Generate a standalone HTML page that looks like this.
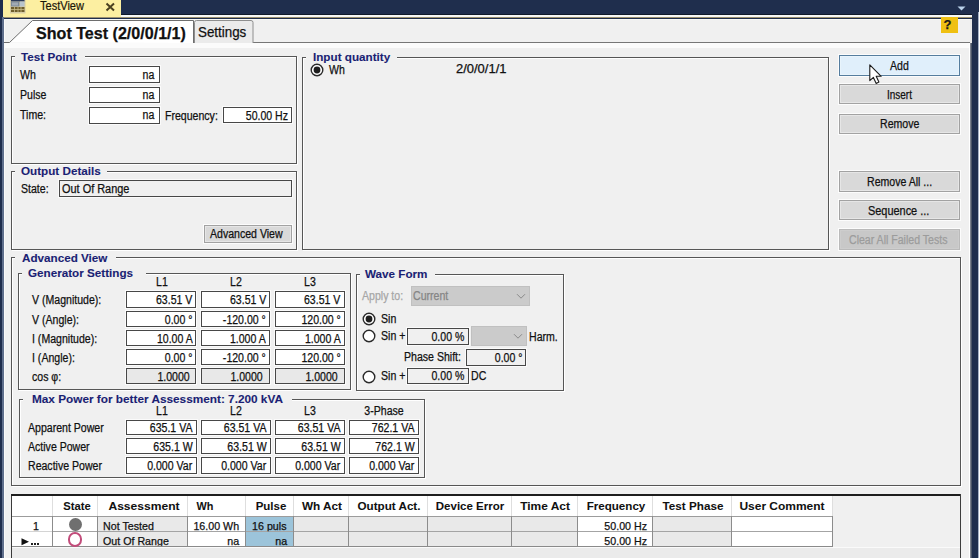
<!DOCTYPE html>
<html><head><meta charset="utf-8">
<style>
*{box-sizing:border-box}
html,body{margin:0;padding:0}
body{width:979px;height:558px;background:#1f2e4d;position:relative;overflow:hidden;font-family:"Liberation Sans",sans-serif;color:#111}
.a{position:absolute}
.t{position:absolute;white-space:nowrap;line-height:1;-webkit-text-stroke:0.25px currentColor}
</style></head><body>
<div class="a" style="left:3.00px;top:0.00px;width:117.50px;height:17.00px;background:#fcefa1;"></div>
<div class="a" style="left:120.50px;top:13.80px;width:851.00px;height:1.20px;background:#101a2a;"></div>
<div class="a" style="left:120.50px;top:15.00px;width:851.00px;height:2.00px;background:#f7f8f6;"></div>
<div class="a" style="left:3.00px;top:17.00px;width:968.50px;height:1.30px;background:#9d9270;"></div>
<div class="a" style="left:3.00px;top:18.50px;width:968.50px;height:1.50px;background:#f9f9f4;"></div>
<div class="a" style="left:4.00px;top:20.00px;width:967.50px;height:538.00px;background:#f0f0f0;"></div>
<div class="a" style="left:2.00px;top:17.00px;width:2.00px;height:541.00px;background:#5f6f8c;"></div>
<div class="a" style="left:4.00px;top:20.00px;width:1.00px;height:538.00px;background:#fafafa;"></div>
<svg class="a" style="left:10px;top:0" width="16" height="14">
 <rect x="0" y="0" width="15.5" height="13.5" fill="#d6cda6"/>
 <rect x="1" y="0" width="13.5" height="1.5" fill="#2a3a5a"/>
 <rect x="1" y="1.5" width="8.5" height="5" fill="#7d8a98"/>
 <rect x="2" y="2.5" width="6" height="3" fill="#a0aab4"/>
 <rect x="10" y="1.5" width="4.5" height="5" fill="#b8c4cc"/>
 <rect x="1" y="7" width="13.5" height="5" fill="#6e5e2c"/>
 <path d="M1 9.5 H14.5 M4.5 7 V12 M8 7 V12 M11 7 V12" stroke="#c8bc8a" stroke-width="0.8"/>
</svg>
<div class="t" style="left:40.13px;top:0.00px;font-size:12px;color:#1a1608;transform:scaleX(0.92);transform-origin:0 0;-webkit-text-stroke:0.2px #1a1608">TestView</div>
<svg class="a" style="left:105px;top:2px" width="11" height="10"><path d="M1.5 1.5 L9 8.5 M9 1.5 L1.5 8.5" stroke="#4a4020" stroke-width="2"/></svg>
<svg class="a" style="left:957px;top:6px" width="10" height="5"><path d="M0.5 0.5 H8.5 L4.5 4.5Z" fill="#b9d2ea"/></svg>
<div class="a" style="left:4.00px;top:43.00px;width:967.50px;height:4.50px;background:#fbfbfb;"></div>
<div class="a" style="left:194.00px;top:42.00px;width:777.50px;height:1.30px;background:#767676;"></div>
<svg class="a" style="left:0;top:0" width="260" height="48">
 <path d="M4 42.5 H9.5 L32.5 20.5 H193.5 V43" fill="#fff" stroke="#6e6e6e" stroke-width="1"/>
 <rect x="4" y="43" width="190" height="4.5" fill="#fbfbfb"/>
 <path d="M194.5 43 V22.5 Q194.5 20.5 196.5 20.5 H251 Q253 20.5 253 22.5 V43" fill="#ebebeb" stroke="#8e8e8e" stroke-width="1"/>
</svg>
<div class="t" style="left:36.27px;top:24.58px;font-size:16.5px;font-weight:bold;color:#111;transform:scaleX(0.975);transform-origin:0 0;letter-spacing:0">Shot Test (2/0/0/1/1)</div>
<div class="t" style="left:197.66px;top:25.30px;font-size:14px;color:#111;transform:scaleX(0.955);transform-origin:0 0;letter-spacing:0">Settings</div>
<div class="a" style="left:940.8px;top:17.2px;width:16.8px;height:16.3px;background:#efc012"></div>
<div class="t" style="left:747.50px;width:400px;text-align:center;top:17.85px;font-size:13px;font-weight:bold;color:#1a1a1a;transform:scaleX(1);transform-origin:50% 0;">?</div>
<div class="a" style="left:968.50px;top:43.00px;width:1.00px;height:515.00px;background:#ffffff;"></div>
<div class="a" style="left:969.50px;top:43.00px;width:1.30px;height:515.00px;background:#7a808c;"></div>
<div class="a" style="left:970.80px;top:43.00px;width:1.20px;height:515.00px;background:#4a5466;"></div>
<div class="a" style="left:969.50px;top:18.50px;width:2.50px;height:24.50px;background:#e8e8e8;"></div>
<div class="a" style="left:977.50px;top:12.00px;width:1.50px;height:546.00px;background:#a4b0c4;"></div>
<div class="a" style="left:11px;top:56px;width:286px;height:108px;border:1px solid #565656;box-shadow:1px 1px 0 #fff, inset 1px 1px 0 #fff"></div>
<div class="a" style="left:15.00px;top:54.00px;width:70.00px;height:5.00px;background:#f0f0f0;"></div>
<div class="t" style="left:21.18px;top:51.73px;font-size:11.5px;font-weight:bold;color:#1b1f74;transform:scaleX(1.015);transform-origin:0 0;letter-spacing:0;-webkit-text-stroke:0.1px currentColor">Test Point</div>
<div class="t" style="left:19.66px;top:69.30px;font-size:12px;color:#111;transform:scaleX(0.88);transform-origin:0 0;">Wh</div>
<div class="t" style="left:19.66px;top:89.10px;font-size:12px;color:#111;transform:scaleX(0.88);transform-origin:0 0;">Pulse</div>
<div class="t" style="left:19.66px;top:109.10px;font-size:12px;color:#111;transform:scaleX(0.88);transform-origin:0 0;">Time:</div>
<div class="a" style="left:89px;top:66px;width:71px;height:17px;background:#fff;border:1px solid #474747;box-shadow:0 0 0 1px #fbfbfb"></div>
<div class="t" style="right:824.46px;top:69.30px;font-size:12px;color:#111;transform:scaleX(0.88);transform-origin:100% 0;text-align:right;">na</div>
<div class="a" style="left:89px;top:87px;width:71px;height:16px;background:#fff;border:1px solid #474747;box-shadow:0 0 0 1px #fbfbfb"></div>
<div class="t" style="right:824.46px;top:89.10px;font-size:12px;color:#111;transform:scaleX(0.88);transform-origin:100% 0;text-align:right;">na</div>
<div class="a" style="left:89px;top:107px;width:71px;height:17px;background:#fff;border:1px solid #474747;box-shadow:0 0 0 1px #fbfbfb"></div>
<div class="t" style="right:824.46px;top:109.10px;font-size:12px;color:#111;transform:scaleX(0.88);transform-origin:100% 0;text-align:right;">na</div>
<div class="t" style="left:165.36px;top:109.70px;font-size:12px;color:#111;transform:scaleX(0.88);transform-origin:0 0;">Frequency:</div>
<div class="a" style="left:223px;top:107px;width:69px;height:16px;background:#fff;border:1px solid #474747;box-shadow:0 0 0 1px #fbfbfb"></div>
<div class="t" style="right:691.26px;top:109.70px;font-size:12px;color:#111;transform:scaleX(0.88);transform-origin:100% 0;text-align:right;">50.00 Hz</div>
<div class="a" style="left:11px;top:171px;width:286px;height:79px;border:1px solid #565656;box-shadow:1px 1px 0 #fff, inset 1px 1px 0 #fff"></div>
<div class="a" style="left:15.00px;top:169.00px;width:92.40px;height:5.00px;background:#f0f0f0;"></div>
<div class="t" style="left:21.48px;top:165.62px;font-size:11.5px;font-weight:bold;color:#1b1f74;transform:scaleX(1.015);transform-origin:0 0;letter-spacing:0;-webkit-text-stroke:0.1px currentColor">Output Details</div>
<div class="t" style="left:20.56px;top:182.80px;font-size:12px;color:#111;transform:scaleX(0.88);transform-origin:0 0;">State:</div>
<div class="a" style="left:59px;top:180px;width:233px;height:17px;background:#f0f0f0;border:1px solid #474747;box-shadow:0 0 0 1px #fbfbfb"></div>
<div class="t" style="left:61.94px;top:182.80px;font-size:12px;color:#111;transform:scaleX(0.91);transform-origin:0 0;">Out Of Range</div>
<div class="a" style="left:204px;top:225px;width:88px;height:18px;background:#d9d9d9;border:1px solid #a2a2a2;box-shadow:inset 0 0 0 1px #e6e6e6, 0 0 0 1px #fcfcfc"></div>
<div class="t" style="left:210.26px;top:227.60px;font-size:12px;color:#111;transform:scaleX(0.88);transform-origin:0 0;">Advanced View</div>
<div class="a" style="left:302px;top:57px;width:527px;height:193px;border:1px solid #565656;box-shadow:1px 1px 0 #fff, inset 1px 1px 0 #fff"></div>
<div class="a" style="left:306.00px;top:55.00px;width:90.60px;height:5.00px;background:#f0f0f0;"></div>
<div class="t" style="left:312.98px;top:51.83px;font-size:11.5px;font-weight:bold;color:#1b1f74;transform:scaleX(1.015);transform-origin:0 0;letter-spacing:0;-webkit-text-stroke:0.1px currentColor">Input quantity</div>
<svg class="a" style="left:308.70px;top:62.20px" width="16" height="16"><circle cx="8" cy="8" r="5.8" fill="#fff" stroke="#2a2a2a" stroke-width="1.4"/><circle cx="8" cy="8" r="3.4" fill="#1e1e1e"/></svg>
<div class="t" style="left:329.46px;top:64.40px;font-size:12px;color:#111;transform:scaleX(0.88);transform-origin:0 0;">Wh</div>
<div class="t" style="left:455.89px;top:62.80px;font-size:12px;color:#111;transform:scaleX(1.08);transform-origin:0 0;">2/0/0/1/1</div>
<div class="a" style="left:839px;top:55px;width:121px;height:21px;background:#e0effb;border:1px solid #557d9e;box-shadow:inset 0 0 0 1px #e8f4fc, 0 0 0 1px #fcfcfc"></div>
<div class="t" style="left:889.56px;top:59.50px;font-size:12px;color:#111;transform:scaleX(0.88);transform-origin:0 0;">Add</div>
<div class="a" style="left:839px;top:84px;width:121px;height:20px;background:#d9d9d9;border:1px solid #a2a2a2;box-shadow:inset 0 0 0 1px #e6e6e6, 0 0 0 1px #fcfcfc"></div>
<div class="t" style="left:886.60px;top:88.70px;font-size:12px;color:#111;transform:scaleX(0.83);transform-origin:0 0;">Insert</div>
<div class="a" style="left:839px;top:114px;width:121px;height:20px;background:#d9d9d9;border:1px solid #a2a2a2;box-shadow:inset 0 0 0 1px #e6e6e6, 0 0 0 1px #fcfcfc"></div>
<div class="t" style="left:880.06px;top:117.50px;font-size:12px;color:#111;transform:scaleX(0.88);transform-origin:0 0;">Remove</div>
<div class="a" style="left:839px;top:171px;width:121px;height:21px;background:#d9d9d9;border:1px solid #a2a2a2;box-shadow:inset 0 0 0 1px #e6e6e6, 0 0 0 1px #fcfcfc"></div>
<div class="t" style="left:866.66px;top:176.20px;font-size:12px;color:#111;transform:scaleX(0.88);transform-origin:0 0;">Remove All ...</div>
<div class="a" style="left:839px;top:200px;width:121px;height:20px;background:#d9d9d9;border:1px solid #a2a2a2;box-shadow:inset 0 0 0 1px #e6e6e6, 0 0 0 1px #fcfcfc"></div>
<div class="t" style="left:867.54px;top:204.60px;font-size:12px;color:#111;transform:scaleX(0.91);transform-origin:0 0;">Sequence ...</div>
<div class="a" style="left:839px;top:229px;width:121px;height:21px;background:#c8c8c8;border:1px solid #bababa;box-shadow:inset 0 0 0 1px #cdcdcd, 0 0 0 1px #fcfcfc"></div>
<div class="t" style="left:849.06px;top:233.90px;font-size:12px;color:#9c9c9c;transform:scaleX(0.88);transform-origin:0 0;">Clear All Failed Tests</div>
<div class="a" style="left:11px;top:257px;width:950px;height:229px;border:1px solid #565656;box-shadow:1px 1px 0 #fff, inset 1px 1px 0 #fff"></div>
<div class="a" style="left:15.00px;top:255.00px;width:100.70px;height:5.00px;background:#f0f0f0;"></div>
<div class="t" style="left:21.68px;top:252.53px;font-size:11.5px;font-weight:bold;color:#1b1f74;transform:scaleX(1.015);transform-origin:0 0;letter-spacing:0;-webkit-text-stroke:0.1px currentColor">Advanced View</div>
<div class="a" style="left:18px;top:273px;width:333px;height:117px;border:1px solid #565656;box-shadow:1px 1px 0 #fff, inset 1px 1px 0 #fff"></div>
<div class="a" style="left:22.00px;top:271.00px;width:124.00px;height:5.00px;background:#f0f0f0;"></div>
<div class="t" style="left:28.48px;top:268.33px;font-size:11.5px;font-weight:bold;color:#1b1f74;transform:scaleX(1.015);transform-origin:0 0;letter-spacing:0;-webkit-text-stroke:0.1px currentColor">Generator Settings</div>
<div class="t" style="left:-38.50px;width:400px;text-align:center;top:275.60px;font-size:12px;color:#111;transform:scaleX(0.88);transform-origin:50% 0;">L1</div>
<div class="t" style="left:35.60px;width:400px;text-align:center;top:275.60px;font-size:12px;color:#111;transform:scaleX(0.88);transform-origin:50% 0;">L2</div>
<div class="t" style="left:110.10px;width:400px;text-align:center;top:275.60px;font-size:12px;color:#111;transform:scaleX(0.88);transform-origin:50% 0;">L3</div>
<div class="t" style="left:31.66px;top:294.30px;font-size:12px;color:#111;transform:scaleX(0.88);transform-origin:0 0;">V (Magnitude):</div>
<div class="a" style="left:126px;top:291px;width:70px;height:17px;background:#fff;border:1px solid #474747;box-shadow:0 0 0 1px #fbfbfb"></div>
<div class="t" style="right:786.66px;top:294.30px;font-size:12px;color:#111;transform:scaleX(0.88);transform-origin:100% 0;text-align:right;">63.51 V</div>
<div class="a" style="left:201px;top:291px;width:69px;height:17px;background:#fff;border:1px solid #474747;box-shadow:0 0 0 1px #fbfbfb"></div>
<div class="t" style="right:712.96px;top:294.30px;font-size:12px;color:#111;transform:scaleX(0.88);transform-origin:100% 0;text-align:right;">63.51 V</div>
<div class="a" style="left:275px;top:291px;width:70px;height:17px;background:#fff;border:1px solid #474747;box-shadow:0 0 0 1px #fbfbfb"></div>
<div class="t" style="right:638.26px;top:294.30px;font-size:12px;color:#111;transform:scaleX(0.88);transform-origin:100% 0;text-align:right;">63.51 V</div>
<div class="t" style="left:31.66px;top:313.60px;font-size:12px;color:#111;transform:scaleX(0.88);transform-origin:0 0;">V (Angle):</div>
<div class="a" style="left:126px;top:311px;width:70px;height:16px;background:#fff;border:1px solid #474747;box-shadow:0 0 0 1px #fbfbfb"></div>
<div class="t" style="right:786.66px;top:313.60px;font-size:12px;color:#111;transform:scaleX(0.88);transform-origin:100% 0;text-align:right;">0.00 °</div>
<div class="a" style="left:201px;top:311px;width:69px;height:16px;background:#fff;border:1px solid #474747;box-shadow:0 0 0 1px #fbfbfb"></div>
<div class="t" style="right:712.96px;top:313.60px;font-size:12px;color:#111;transform:scaleX(0.88);transform-origin:100% 0;text-align:right;">-120.00 °</div>
<div class="a" style="left:275px;top:311px;width:70px;height:16px;background:#fff;border:1px solid #474747;box-shadow:0 0 0 1px #fbfbfb"></div>
<div class="t" style="right:638.26px;top:313.60px;font-size:12px;color:#111;transform:scaleX(0.88);transform-origin:100% 0;text-align:right;">120.00 °</div>
<div class="t" style="left:31.66px;top:332.50px;font-size:12px;color:#111;transform:scaleX(0.88);transform-origin:0 0;">I (Magnitude):</div>
<div class="a" style="left:126px;top:330px;width:70px;height:16px;background:#fff;border:1px solid #474747;box-shadow:0 0 0 1px #fbfbfb"></div>
<div class="t" style="right:786.66px;top:332.50px;font-size:12px;color:#111;transform:scaleX(0.88);transform-origin:100% 0;text-align:right;">10.00 A</div>
<div class="a" style="left:201px;top:330px;width:69px;height:16px;background:#fff;border:1px solid #474747;box-shadow:0 0 0 1px #fbfbfb"></div>
<div class="t" style="right:712.96px;top:332.50px;font-size:12px;color:#111;transform:scaleX(0.88);transform-origin:100% 0;text-align:right;">1.000 A</div>
<div class="a" style="left:275px;top:330px;width:70px;height:16px;background:#fff;border:1px solid #474747;box-shadow:0 0 0 1px #fbfbfb"></div>
<div class="t" style="right:638.26px;top:332.50px;font-size:12px;color:#111;transform:scaleX(0.88);transform-origin:100% 0;text-align:right;">1.000 A</div>
<div class="t" style="left:31.66px;top:351.70px;font-size:12px;color:#111;transform:scaleX(0.88);transform-origin:0 0;">I (Angle):</div>
<div class="a" style="left:126px;top:349px;width:70px;height:16px;background:#fff;border:1px solid #474747;box-shadow:0 0 0 1px #fbfbfb"></div>
<div class="t" style="right:786.66px;top:351.70px;font-size:12px;color:#111;transform:scaleX(0.88);transform-origin:100% 0;text-align:right;">0.00 °</div>
<div class="a" style="left:201px;top:349px;width:69px;height:16px;background:#fff;border:1px solid #474747;box-shadow:0 0 0 1px #fbfbfb"></div>
<div class="t" style="right:712.96px;top:351.70px;font-size:12px;color:#111;transform:scaleX(0.88);transform-origin:100% 0;text-align:right;">-120.00 °</div>
<div class="a" style="left:275px;top:349px;width:70px;height:16px;background:#fff;border:1px solid #474747;box-shadow:0 0 0 1px #fbfbfb"></div>
<div class="t" style="right:638.26px;top:351.70px;font-size:12px;color:#111;transform:scaleX(0.88);transform-origin:100% 0;text-align:right;">120.00 °</div>
<div class="t" style="left:31.66px;top:370.60px;font-size:12px;color:#111;transform:scaleX(0.88);transform-origin:0 0;">cos φ:</div>
<div class="a" style="left:126px;top:368px;width:70px;height:16px;background:#e8e8e8;border:1px solid #474747;box-shadow:0 0 0 1px #fbfbfb"></div>
<div class="t" style="right:789.66px;top:370.60px;font-size:12px;color:#111;transform:scaleX(0.88);transform-origin:100% 0;text-align:right;">1.0000</div>
<div class="a" style="left:201px;top:368px;width:69px;height:16px;background:#e8e8e8;border:1px solid #474747;box-shadow:0 0 0 1px #fbfbfb"></div>
<div class="t" style="right:715.96px;top:370.60px;font-size:12px;color:#111;transform:scaleX(0.88);transform-origin:100% 0;text-align:right;">1.0000</div>
<div class="a" style="left:275px;top:368px;width:70px;height:16px;background:#e8e8e8;border:1px solid #474747;box-shadow:0 0 0 1px #fbfbfb"></div>
<div class="t" style="right:641.26px;top:370.60px;font-size:12px;color:#111;transform:scaleX(0.88);transform-origin:100% 0;text-align:right;">1.0000</div>
<div class="a" style="left:356px;top:274px;width:208px;height:117px;border:1px solid #565656;box-shadow:1px 1px 0 #fff, inset 1px 1px 0 #fff"></div>
<div class="a" style="left:360.00px;top:272.00px;width:75.20px;height:5.00px;background:#f0f0f0;"></div>
<div class="t" style="left:365.48px;top:268.63px;font-size:11.5px;font-weight:bold;color:#1b1f74;transform:scaleX(1.015);transform-origin:0 0;letter-spacing:0;-webkit-text-stroke:0.1px currentColor">Wave Form</div>
<div class="t" style="left:361.76px;top:289.50px;font-size:12px;color:#a6a6a6;transform:scaleX(0.88);transform-origin:0 0;">Apply to:</div>
<div class="a" style="left:410.6px;top:285.5px;width:119.4px;height:20.5px;background:#cbcbcb;border:1px solid #c0c0c0"></div>
<div class="t" style="left:413.46px;top:289.90px;font-size:12px;color:#858585;transform:scaleX(0.88);transform-origin:0 0;">Current</div>
<svg class="a" style="left:516px;top:293px" width="10" height="7"><path d="M1 1.2 L5 5.2 L9 1.2" fill="none" stroke="#8a8a8a" stroke-width="1"/></svg>
<svg class="a" style="left:360.80px;top:311.10px" width="16" height="16"><circle cx="8" cy="8" r="5.8" fill="#fff" stroke="#2a2a2a" stroke-width="1.4"/><circle cx="8" cy="8" r="3.4" fill="#1e1e1e"/></svg>
<div class="t" style="left:380.86px;top:313.20px;font-size:12px;color:#111;transform:scaleX(0.88);transform-origin:0 0;">Sin</div>
<svg class="a" style="left:360.80px;top:328.20px" width="16" height="16"><circle cx="8" cy="8" r="5.8" fill="#fff" stroke="#2a2a2a" stroke-width="1.4"/></svg>
<div class="t" style="left:380.86px;top:330.20px;font-size:12px;color:#111;transform:scaleX(0.88);transform-origin:0 0;">Sin +</div>
<div class="a" style="left:407px;top:328px;width:62px;height:17px;background:#f0f0f0;border:1px solid #474747;box-shadow:0 0 0 1px #fbfbfb"></div>
<div class="t" style="right:514.76px;top:330.50px;font-size:12px;color:#111;transform:scaleX(0.88);transform-origin:100% 0;text-align:right;">0.00 %</div>
<div class="a" style="left:471.2px;top:325.8px;width:55.8px;height:20.2px;background:#cbcbcb;border:1px solid #c0c0c0"></div>
<svg class="a" style="left:513px;top:333px" width="10" height="7"><path d="M1 1.2 L5 5.2 L9 1.2" fill="none" stroke="#8a8a8a" stroke-width="1"/></svg>
<div class="t" style="left:528.86px;top:330.50px;font-size:12px;color:#111;transform:scaleX(0.88);transform-origin:0 0;">Harm.</div>
<div class="t" style="left:403.96px;top:350.70px;font-size:12px;color:#111;transform:scaleX(0.88);transform-origin:0 0;">Phase Shift:</div>
<div class="a" style="left:466px;top:349px;width:60px;height:17px;background:#f0f0f0;border:1px solid #474747;box-shadow:0 0 0 1px #fbfbfb"></div>
<div class="t" style="right:456.56px;top:351.70px;font-size:12px;color:#111;transform:scaleX(0.88);transform-origin:100% 0;text-align:right;">0.00 °</div>
<svg class="a" style="left:360.90px;top:368.60px" width="16" height="16"><circle cx="8" cy="8" r="5.8" fill="#fff" stroke="#2a2a2a" stroke-width="1.4"/></svg>
<div class="t" style="left:380.86px;top:370.40px;font-size:12px;color:#111;transform:scaleX(0.88);transform-origin:0 0;">Sin +</div>
<div class="a" style="left:407px;top:368px;width:62px;height:16px;background:#f0f0f0;border:1px solid #474747;box-shadow:0 0 0 1px #fbfbfb"></div>
<div class="t" style="right:514.76px;top:370.40px;font-size:12px;color:#111;transform:scaleX(0.88);transform-origin:100% 0;text-align:right;">0.00 %</div>
<div class="t" style="left:471.06px;top:370.40px;font-size:12px;color:#111;transform:scaleX(0.88);transform-origin:0 0;">DC</div>
<div class="a" style="left:19px;top:399px;width:406px;height:79px;border:1px solid #565656;box-shadow:1px 1px 0 #fff, inset 1px 1px 0 #fff"></div>
<div class="a" style="left:23.00px;top:397.00px;width:269.00px;height:5.00px;background:#f0f0f0;"></div>
<div class="t" style="left:32.17px;top:393.83px;font-size:11.5px;font-weight:bold;color:#1b1f74;transform:scaleX(1.025);transform-origin:0 0;letter-spacing:0;-webkit-text-stroke:0.1px currentColor">Max Power for better Assessment: 7.200 kVA</div>
<div class="t" style="left:-38.40px;width:400px;text-align:center;top:404.60px;font-size:12px;color:#111;transform:scaleX(0.88);transform-origin:50% 0;">L1</div>
<div class="t" style="left:35.80px;width:400px;text-align:center;top:404.60px;font-size:12px;color:#111;transform:scaleX(0.88);transform-origin:50% 0;">L2</div>
<div class="t" style="left:109.90px;width:400px;text-align:center;top:404.60px;font-size:12px;color:#111;transform:scaleX(0.88);transform-origin:50% 0;">L3</div>
<div class="t" style="left:184.00px;width:400px;text-align:center;top:404.60px;font-size:12px;color:#111;transform:scaleX(0.88);transform-origin:50% 0;">3-Phase</div>
<div class="t" style="left:27.56px;top:422.00px;font-size:12px;color:#111;transform:scaleX(0.88);transform-origin:0 0;">Apparent Power</div>
<div class="a" style="left:126px;top:420px;width:71px;height:15px;background:#fff;border:1px solid #474747;box-shadow:0 0 0 1px #fbfbfb"></div>
<div class="t" style="right:786.56px;top:422.00px;font-size:12px;color:#111;transform:scaleX(0.88);transform-origin:100% 0;text-align:right;">635.1 VA</div>
<div class="a" style="left:201px;top:420px;width:70px;height:15px;background:#fff;border:1px solid #474747;box-shadow:0 0 0 1px #fbfbfb"></div>
<div class="t" style="right:712.76px;top:422.00px;font-size:12px;color:#111;transform:scaleX(0.88);transform-origin:100% 0;text-align:right;">63.51 VA</div>
<div class="a" style="left:275px;top:420px;width:70px;height:15px;background:#fff;border:1px solid #474747;box-shadow:0 0 0 1px #fbfbfb"></div>
<div class="t" style="right:638.66px;top:422.00px;font-size:12px;color:#111;transform:scaleX(0.88);transform-origin:100% 0;text-align:right;">63.51 VA</div>
<div class="a" style="left:349px;top:420px;width:70px;height:15px;background:#fff;border:1px solid #474747;box-shadow:0 0 0 1px #fbfbfb"></div>
<div class="t" style="right:564.46px;top:422.00px;font-size:12px;color:#111;transform:scaleX(0.88);transform-origin:100% 0;text-align:right;">762.1 VA</div>
<div class="t" style="left:27.56px;top:440.60px;font-size:12px;color:#111;transform:scaleX(0.88);transform-origin:0 0;">Active Power</div>
<div class="a" style="left:126px;top:438px;width:71px;height:16px;background:#fff;border:1px solid #474747;box-shadow:0 0 0 1px #fbfbfb"></div>
<div class="t" style="right:786.56px;top:440.60px;font-size:12px;color:#111;transform:scaleX(0.88);transform-origin:100% 0;text-align:right;">635.1 W</div>
<div class="a" style="left:201px;top:438px;width:70px;height:16px;background:#fff;border:1px solid #474747;box-shadow:0 0 0 1px #fbfbfb"></div>
<div class="t" style="right:712.76px;top:440.60px;font-size:12px;color:#111;transform:scaleX(0.88);transform-origin:100% 0;text-align:right;">63.51 W</div>
<div class="a" style="left:275px;top:438px;width:70px;height:16px;background:#fff;border:1px solid #474747;box-shadow:0 0 0 1px #fbfbfb"></div>
<div class="t" style="right:638.66px;top:440.60px;font-size:12px;color:#111;transform:scaleX(0.88);transform-origin:100% 0;text-align:right;">63.51 W</div>
<div class="a" style="left:349px;top:438px;width:70px;height:16px;background:#fff;border:1px solid #474747;box-shadow:0 0 0 1px #fbfbfb"></div>
<div class="t" style="right:564.46px;top:440.60px;font-size:12px;color:#111;transform:scaleX(0.88);transform-origin:100% 0;text-align:right;">762.1 W</div>
<div class="t" style="left:27.56px;top:459.80px;font-size:12px;color:#111;transform:scaleX(0.88);transform-origin:0 0;">Reactive Power</div>
<div class="a" style="left:126px;top:457px;width:71px;height:17px;background:#fff;border:1px solid #474747;box-shadow:0 0 0 1px #fbfbfb"></div>
<div class="t" style="right:786.56px;top:459.80px;font-size:12px;color:#111;transform:scaleX(0.88);transform-origin:100% 0;text-align:right;">0.000 Var</div>
<div class="a" style="left:201px;top:457px;width:70px;height:17px;background:#fff;border:1px solid #474747;box-shadow:0 0 0 1px #fbfbfb"></div>
<div class="t" style="right:712.76px;top:459.80px;font-size:12px;color:#111;transform:scaleX(0.88);transform-origin:100% 0;text-align:right;">0.000 Var</div>
<div class="a" style="left:275px;top:457px;width:70px;height:17px;background:#fff;border:1px solid #474747;box-shadow:0 0 0 1px #fbfbfb"></div>
<div class="t" style="right:638.66px;top:459.80px;font-size:12px;color:#111;transform:scaleX(0.88);transform-origin:100% 0;text-align:right;">0.000 Var</div>
<div class="a" style="left:349px;top:457px;width:70px;height:17px;background:#fff;border:1px solid #474747;box-shadow:0 0 0 1px #fbfbfb"></div>
<div class="t" style="right:564.46px;top:459.80px;font-size:12px;color:#111;transform:scaleX(0.88);transform-origin:100% 0;text-align:right;">0.000 Var</div>
<div class="a" style="left:11.00px;top:494.00px;width:950.00px;height:64.00px;background:#f0f0f0;"></div>
<div class="a" style="left:11.00px;top:494.00px;width:950.00px;height:2.00px;background:#1e1e1e;"></div>
<div class="a" style="left:11.00px;top:496.00px;width:1.00px;height:62.00px;background:#3a3a3a;"></div>
<div class="a" style="left:960.00px;top:494.00px;width:1.00px;height:64.00px;background:#3c3c3c;"></div>
<div class="a" style="left:12.00px;top:496.00px;width:820.20px;height:20.00px;background:#ffffff;"></div>
<div class="a" style="left:51.80px;top:496.00px;width:1.00px;height:20.00px;background:#dedede;"></div>
<div class="a" style="left:97.00px;top:496.00px;width:1.00px;height:20.00px;background:#dedede;"></div>
<div class="a" style="left:187.00px;top:496.00px;width:1.00px;height:20.00px;background:#dedede;"></div>
<div class="a" style="left:245.20px;top:496.00px;width:1.00px;height:20.00px;background:#dedede;"></div>
<div class="a" style="left:293.00px;top:496.00px;width:1.00px;height:20.00px;background:#dedede;"></div>
<div class="a" style="left:347.60px;top:496.00px;width:1.00px;height:20.00px;background:#dedede;"></div>
<div class="a" style="left:427.00px;top:496.00px;width:1.00px;height:20.00px;background:#dedede;"></div>
<div class="a" style="left:510.70px;top:496.00px;width:1.00px;height:20.00px;background:#dedede;"></div>
<div class="a" style="left:577.10px;top:496.00px;width:1.00px;height:20.00px;background:#dedede;"></div>
<div class="a" style="left:652.10px;top:496.00px;width:1.00px;height:20.00px;background:#dedede;"></div>
<div class="a" style="left:730.60px;top:496.00px;width:1.00px;height:20.00px;background:#dedede;"></div>
<div class="a" style="left:831.70px;top:496.00px;width:1.00px;height:20.00px;background:#dedede;"></div>
<div class="a" style="left:12.00px;top:515.50px;width:821.00px;height:1.00px;background:#9c9c9c;"></div>
<div class="t" style="left:-123.50px;width:400px;text-align:center;top:501.03px;font-size:11.5px;font-weight:bold;color:#111;transform:scaleX(0.9747637576431353);transform-origin:50% 0;letter-spacing:0;-webkit-text-stroke:0.05px currentColor">State</div>
<div class="t" style="left:-56.00px;width:400px;text-align:center;top:501.03px;font-size:11.5px;font-weight:bold;color:#111;transform:scaleX(1.05);transform-origin:50% 0;letter-spacing:0;-webkit-text-stroke:0.05px currentColor">Assessment</div>
<div class="t" style="left:5.25px;width:400px;text-align:center;top:501.03px;font-size:11.5px;font-weight:bold;color:#111;transform:scaleX(0.9446288209606974);transform-origin:50% 0;letter-spacing:0;-webkit-text-stroke:0.05px currentColor">Wh</div>
<div class="t" style="left:70.55px;width:400px;text-align:center;top:501.03px;font-size:11.5px;font-weight:bold;color:#111;transform:scaleX(1.0009169638308708);transform-origin:50% 0;letter-spacing:0;-webkit-text-stroke:0.05px currentColor">Pulse</div>
<div class="t" style="left:122.05px;width:400px;text-align:center;top:501.03px;font-size:11.5px;font-weight:bold;color:#111;transform:scaleX(1.0232854864433818);transform-origin:50% 0;letter-spacing:0;-webkit-text-stroke:0.05px currentColor">Wh Act</div>
<div class="t" style="left:189.20px;width:400px;text-align:center;top:501.03px;font-size:11.5px;font-weight:bold;color:#111;transform:scaleX(1.0133199296305604);transform-origin:50% 0;letter-spacing:0;-webkit-text-stroke:0.05px currentColor">Output Act.</div>
<div class="t" style="left:270.30px;width:400px;text-align:center;top:501.03px;font-size:11.5px;font-weight:bold;color:#111;transform:scaleX(1.0005942857142853);transform-origin:50% 0;letter-spacing:0;-webkit-text-stroke:0.05px currentColor">Device Error</div>
<div class="t" style="left:345.35px;width:400px;text-align:center;top:501.03px;font-size:11.5px;font-weight:bold;color:#111;transform:scaleX(1.0371046625366818);transform-origin:50% 0;letter-spacing:0;-webkit-text-stroke:0.05px currentColor">Time Act</div>
<div class="t" style="left:416.20px;width:400px;text-align:center;top:501.03px;font-size:11.5px;font-weight:bold;color:#111;transform:scaleX(1.007630306286943);transform-origin:50% 0;letter-spacing:0;-webkit-text-stroke:0.05px currentColor">Frequency</div>
<div class="t" style="left:492.60px;width:400px;text-align:center;top:501.03px;font-size:11.5px;font-weight:bold;color:#111;transform:scaleX(1.0159791122715398);transform-origin:50% 0;letter-spacing:0;-webkit-text-stroke:0.05px currentColor">Test Phase</div>
<div class="t" style="left:582.45px;width:400px;text-align:center;top:501.03px;font-size:11.5px;font-weight:bold;color:#111;transform:scaleX(1.0405808177302258);transform-origin:50% 0;letter-spacing:0;-webkit-text-stroke:0.05px currentColor">User Comment</div>
<div class="a" style="left:12.00px;top:516.50px;width:39.80px;height:14.70px;background:#fff;"></div>
<div class="a" style="left:52.80px;top:516.50px;width:44.20px;height:14.70px;background:#fff;"></div>
<div class="a" style="left:98.00px;top:516.50px;width:89.00px;height:14.70px;background:#e9e9e9;"></div>
<div class="a" style="left:188.00px;top:516.50px;width:57.20px;height:14.70px;background:#fff;"></div>
<div class="a" style="left:246.20px;top:516.50px;width:46.80px;height:14.70px;background:#9cc4da;"></div>
<div class="a" style="left:294.00px;top:516.50px;width:53.60px;height:14.70px;background:#e9e9e9;"></div>
<div class="a" style="left:348.60px;top:516.50px;width:78.40px;height:14.70px;background:#e9e9e9;"></div>
<div class="a" style="left:428.00px;top:516.50px;width:82.70px;height:14.70px;background:#e9e9e9;"></div>
<div class="a" style="left:511.70px;top:516.50px;width:65.40px;height:14.70px;background:#e9e9e9;"></div>
<div class="a" style="left:578.10px;top:516.50px;width:74.00px;height:14.70px;background:#fff;"></div>
<div class="a" style="left:653.10px;top:516.50px;width:77.50px;height:14.70px;background:#e9e9e9;"></div>
<div class="a" style="left:731.60px;top:516.50px;width:100.10px;height:14.70px;background:#fff;"></div>
<div class="a" style="left:12.00px;top:532.20px;width:39.80px;height:13.80px;background:#fff;"></div>
<div class="a" style="left:52.80px;top:532.20px;width:44.20px;height:13.80px;background:#fff;"></div>
<div class="a" style="left:98.00px;top:532.20px;width:89.00px;height:13.80px;background:#e9e9e9;"></div>
<div class="a" style="left:188.00px;top:532.20px;width:57.20px;height:13.80px;background:#fff;"></div>
<div class="a" style="left:246.20px;top:532.20px;width:46.80px;height:13.80px;background:#9cc4da;"></div>
<div class="a" style="left:294.00px;top:532.20px;width:53.60px;height:13.80px;background:#e9e9e9;"></div>
<div class="a" style="left:348.60px;top:532.20px;width:78.40px;height:13.80px;background:#e9e9e9;"></div>
<div class="a" style="left:428.00px;top:532.20px;width:82.70px;height:13.80px;background:#e9e9e9;"></div>
<div class="a" style="left:511.70px;top:532.20px;width:65.40px;height:13.80px;background:#e9e9e9;"></div>
<div class="a" style="left:578.10px;top:532.20px;width:74.00px;height:13.80px;background:#fff;"></div>
<div class="a" style="left:653.10px;top:532.20px;width:77.50px;height:13.80px;background:#e9e9e9;"></div>
<div class="a" style="left:731.60px;top:532.20px;width:100.10px;height:13.80px;background:#fff;"></div>
<div class="a" style="left:52.30px;top:531.20px;width:780.70px;height:1.00px;background:#a4a4a4;"></div>
<div class="a" style="left:12.00px;top:531.20px;width:40.00px;height:1.00px;background:#d4d4d4;"></div>
<div class="a" style="left:12.00px;top:546.00px;width:821.00px;height:1.00px;background:#8a8a8a;"></div>
<div class="a" style="left:12.00px;top:547.00px;width:948.00px;height:11.00px;background:#ebebeb;"></div>
<div class="a" style="left:12.00px;top:547.00px;width:948.00px;height:1.00px;background:#fafafa;"></div>
<div class="a" style="left:51.80px;top:516.00px;width:1.00px;height:31.00px;background:#8c8c8c;"></div>
<div class="a" style="left:97.00px;top:516.00px;width:1.00px;height:31.00px;background:#8c8c8c;"></div>
<div class="a" style="left:187.00px;top:516.00px;width:1.00px;height:31.00px;background:#8c8c8c;"></div>
<div class="a" style="left:245.20px;top:516.00px;width:1.00px;height:31.00px;background:#8c8c8c;"></div>
<div class="a" style="left:293.00px;top:516.00px;width:1.00px;height:31.00px;background:#8c8c8c;"></div>
<div class="a" style="left:347.60px;top:516.00px;width:1.00px;height:31.00px;background:#8c8c8c;"></div>
<div class="a" style="left:427.00px;top:516.00px;width:1.00px;height:31.00px;background:#8c8c8c;"></div>
<div class="a" style="left:510.70px;top:516.00px;width:1.00px;height:31.00px;background:#8c8c8c;"></div>
<div class="a" style="left:577.10px;top:516.00px;width:1.00px;height:31.00px;background:#8c8c8c;"></div>
<div class="a" style="left:652.10px;top:516.00px;width:1.00px;height:31.00px;background:#8c8c8c;"></div>
<div class="a" style="left:730.60px;top:516.00px;width:1.00px;height:31.00px;background:#8c8c8c;"></div>
<div class="a" style="left:831.70px;top:516.00px;width:1.00px;height:31.00px;background:#8c8c8c;"></div>
<div class="t" style="left:33.25px;top:520.85px;font-size:11px;color:#111;transform:scaleX(0.97);transform-origin:0 0;clip-path:inset(-2px -2px 0.65px -2px);">1</div>
<div class="t" style="left:102.95px;top:521.05px;font-size:11px;color:#111;transform:scaleX(0.97);transform-origin:0 0;clip-path:inset(-2px -2px 0.85px -2px);">Not Tested</div>
<div class="t" style="right:739.85px;top:520.95px;font-size:11px;color:#111;transform:scaleX(0.97);transform-origin:100% 0;text-align:right;clip-path:inset(-2px -2px 0.75px -2px);">16.00 Wh</div>
<div class="t" style="right:692.35px;top:521.25px;font-size:11px;color:#111;transform:scaleX(0.97);transform-origin:100% 0;text-align:right;clip-path:inset(-2px -2px 1.05px -2px);">16 puls</div>
<div class="t" style="right:331.95px;top:521.05px;font-size:11px;color:#111;transform:scaleX(0.97);transform-origin:100% 0;text-align:right;clip-path:inset(-2px -2px 0.85px -2px);">50.00 Hz</div>
<div class="t" style="left:102.95px;top:536.25px;font-size:11px;color:#111;transform:scaleX(0.97);transform-origin:0 0;clip-path:inset(-2px -2px 1.25px -2px);">Out Of Range</div>
<div class="t" style="right:739.95px;top:536.25px;font-size:11px;color:#111;transform:scaleX(0.97);transform-origin:100% 0;text-align:right;clip-path:inset(-2px -2px 1.25px -2px);">na</div>
<div class="t" style="right:692.15px;top:536.25px;font-size:11px;color:#111;transform:scaleX(0.97);transform-origin:100% 0;text-align:right;clip-path:inset(-2px -2px 1.25px -2px);">na</div>
<div class="t" style="right:331.95px;top:536.05px;font-size:11px;color:#111;transform:scaleX(0.97);transform-origin:100% 0;text-align:right;clip-path:inset(-2px -2px 1.05px -2px);">50.00 Hz</div>
<svg class="a" style="left:20.5px;top:538px" width="9" height="8"><path d="M0.5 0.3 L8 3.8 L0.5 7.3Z" fill="#111"/></svg>
<div class="a" style="left:30.50px;top:543.00px;width:2.00px;height:2.00px;background:#222;"></div>
<div class="a" style="left:33.80px;top:543.00px;width:2.00px;height:2.00px;background:#222;"></div>
<div class="a" style="left:37.00px;top:543.00px;width:2.00px;height:2.00px;background:#222;"></div>
<div class="a" style="left:68.8px;top:518.2px;width:12.9px;height:12.9px;border-radius:50%;background:#6f6f6f"></div>
<div class="a" style="left:68.2px;top:532.4px;width:14.2px;height:14.2px;border-radius:50%;border:2.6px solid #c24c7a"></div>
<svg class="a" style="left:869px;top:64px" width="15" height="22"><path d="M0.8 0.8 V16.6 L4.4 13.4 L7.2 19.4 L9.9 18.1 L7.2 12.3 H12.2 Z" fill="#fff" stroke="#1a1a1a" stroke-width="1.1" stroke-linejoin="round"/></svg>
</body></html>
